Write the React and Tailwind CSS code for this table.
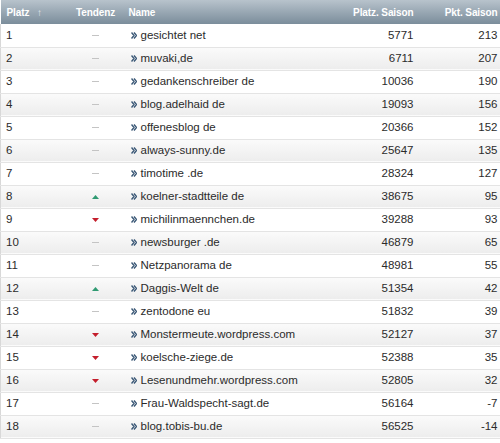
const rows = [
  [1, 0, 'gesichtet net', 5771, 213],
  [2, 0, 'muvaki,de', 6711, 207],
  [3, 0, 'gedankenschreiber de', 10036, 190],
  [4, 0, 'blog.adelhaid de', 19093, 156],
  [5, 0, 'offenesblog de', 20366, 152],
  [6, 0, 'always-sunny.de', 25647, 135],
  [7, 0, 'timotime .de', 28324, 127],
  [8, 1, 'koelner-stadtteile de', 38675, 95],
  [9, -1, 'michilinmaennchen.de', 39288, 93],
  [10, 0, 'newsburger .de', 46879, 65],
  [11, 0, 'Netzpanorama de', 48981, 55],
  [12, 1, 'Daggis-Welt de', 51354, 42],
  [13, 0, 'zentodone eu', 51832, 39],
  [14, -1, 'Monstermeute.wordpress.com', 52127, 37],
  [15, -1, 'koelsche-ziege.de', 52388, 35],
  [16, -1, 'Lesenundmehr.wordpress.com', 52805, 32],
  [17, 0, 'Frau-Waldspecht-sagt.de', 56164, -7],
  [18, 0, 'blog.tobis-bu.de', 56525, -14],
];

function Trend({ t }) {
  if (t === 1)
    return (
      <svg width="7" height="4" viewBox="0 0 7 4" className="inline-block">
        <path d="M3.5 0 L7 4 L0 4 Z" fill="#2f9a72" />
      </svg>
    );
  if (t === -1)
    return (
      <svg width="7" height="4" viewBox="0 0 7 4" className="inline-block">
        <path d="M0 0 L7 0 L3.5 4 Z" fill="#c41e2c" />
      </svg>
    );
  return <span className="inline-block w-[7px] h-px bg-[#c4c4c4] align-middle" />;
}

function Chevrons() {
  return (
    <svg width="6" height="7" viewBox="0 0 6 7" className="inline-block mr-[4px]">
      <path d="M0.5 0.5 L3 3.5 L0.5 6.5 M3 0.5 L5.5 3.5 L3 6.5" stroke="#3d5a78" strokeWidth="1.4" fill="none" />
    </svg>
  );
}

export default function App() {
  return (
    <div className="w-[500px] h-[443px] bg-white font-['Liberation_Sans',Arial,sans-serif] text-[11.5px] text-[#2b2b2b]">
      <table className="w-full border-collapse table-fixed">
        <colgroup>
          <col className="w-[70px]" />
          <col className="w-[50px]" />
          <col className="w-[207px]" />
          <col className="w-[89px]" />
          <col className="w-[84px]" />
        </colgroup>
        <thead>
          <tr className="h-[24px] bg-gradient-to-b from-[#b8c3cc] to-[#7b8d9b] text-white font-bold text-[10px] tracking-[-0.1px] text-left">
            <th className="pl-[6px]">
              Platz <span className="ml-[5px] text-[#e3e8ec] text-[10px]">↑</span>
            </th>
            <th className="text-center">Tendenz</th>
            <th className="pl-[8px]">Name</th>
            <th className="text-right pr-[3px]">Platz. Saison</th>
            <th className="text-right pr-[3px]">Pkt. Saison</th>
          </tr>
        </thead>
        <tbody>
          {rows.map(([p, t, name, ps, pk]) => (
            <tr
              key={p}
              className={`h-[23px] border-b border-[#e4e4e4] border-l border-l-[#d8d8d8] ${
                p % 2 === 0 ? 'bg-gradient-to-b from-[#fbfbfb] to-[#ededed]' : 'bg-white'
              }`}
            >
              <td className="pl-[5px]">{p}</td>
              <td className="text-center leading-none">
                <Trend t={t} />
              </td>
              <td className="pl-[10px] whitespace-nowrap">
                <Chevrons />
                {name}
              </td>
              <td className="text-right pr-[3px]">{ps}</td>
              <td className="text-right pr-[3px]">{pk}</td>
            </tr>
          ))}
        </tbody>
      </table>
    </div>
  );
}
